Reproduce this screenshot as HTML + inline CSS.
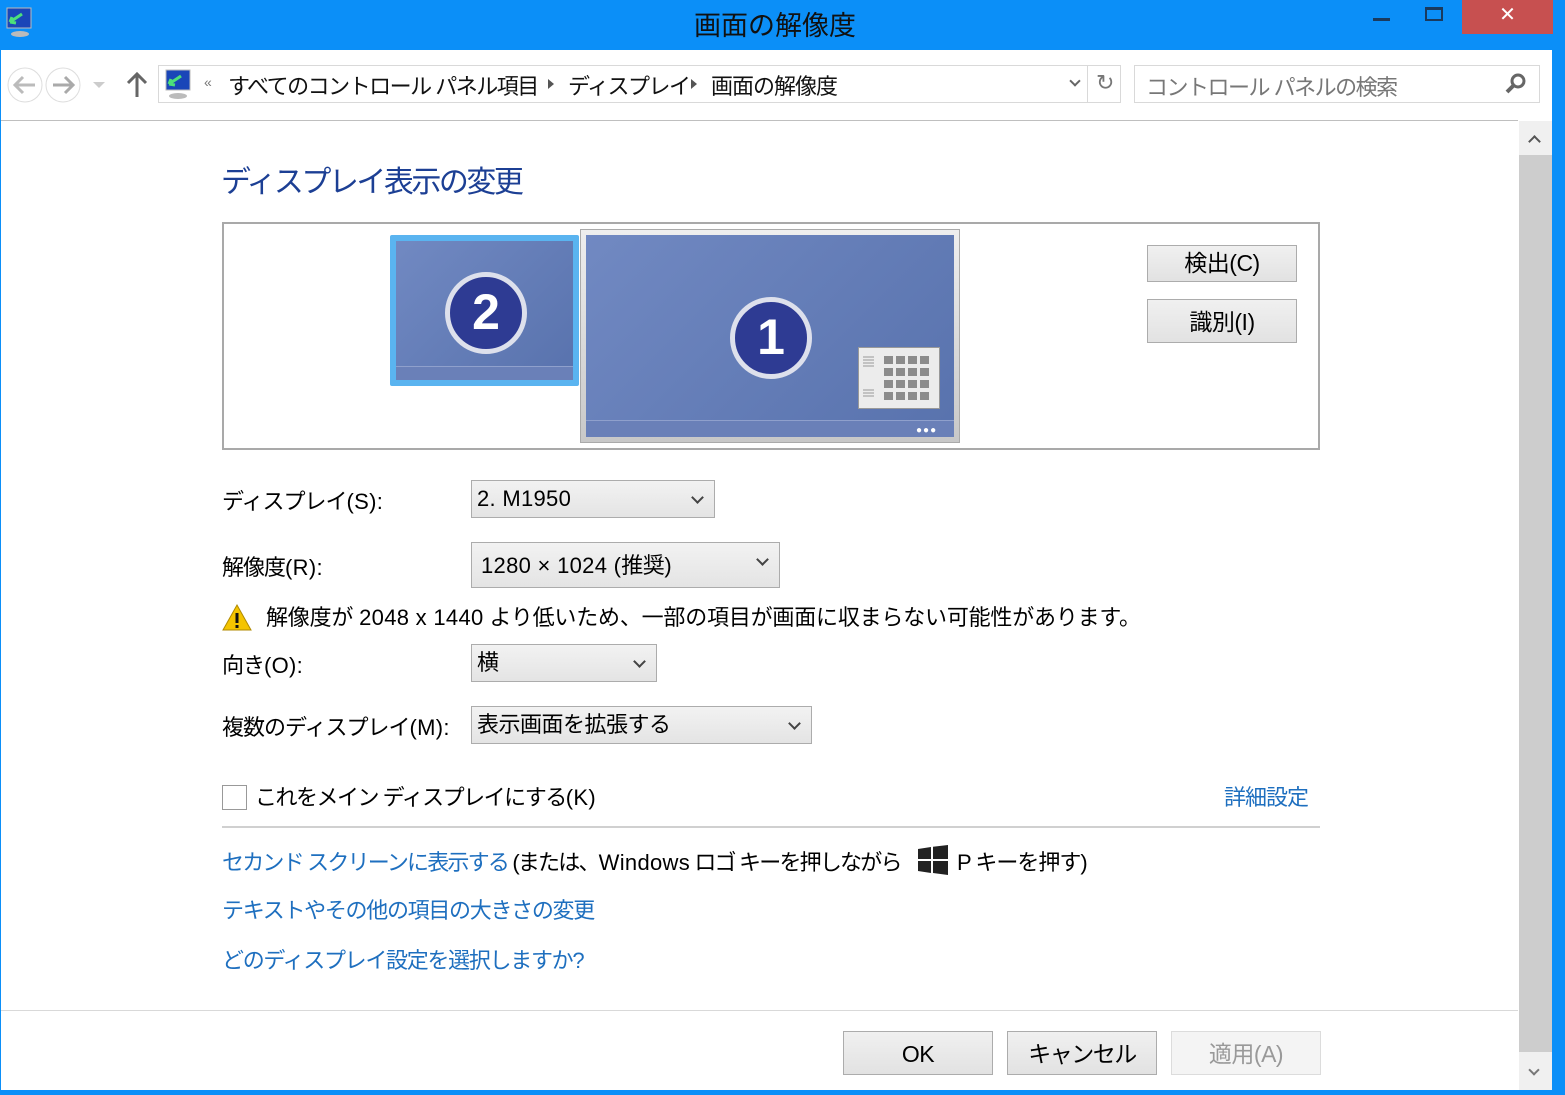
<!DOCTYPE html>
<html><head><meta charset="utf-8"><style>
*{margin:0;padding:0;box-sizing:border-box}
body{width:1565px;height:1095px;background:#0b8ff8;position:relative;overflow:hidden;font-family:"Liberation Sans","Noto Sans CJK JP",sans-serif;color:#000}
.a{position:absolute;white-space:nowrap}
.t{font-size:22px;letter-spacing:-1px}
.l{letter-spacing:0.3px}
.link{color:#1e6fbf}
.dd{position:absolute;background:linear-gradient(#f2f2f2,#e4e4e4);border:1px solid #acacac;font-size:22px;letter-spacing:-0.5px;padding-left:5px;line-height:36px}
.dd:after{content:"";position:absolute;right:12px;top:12px;width:7px;height:7px;border-right:2px solid #444;border-bottom:2px solid #444;transform:rotate(45deg)}
.btn{position:absolute;background:linear-gradient(#f0f0f0,#e2e2e2);border:1px solid #acacac;font-size:23px;text-align:center;letter-spacing:-0.5px}
</style></head><body>
<svg class="a" style="left:6px;top:6px" width="28" height="32" viewBox="0 0 28 32"><rect x="1" y="2" width="24" height="20" fill="#1a46b8" stroke="#bbb"/><path d="M4 16 L16 8 M4 16 l6 1 M4 16 l2-5" stroke="#4de07a" stroke-width="3" fill="none"/><ellipse cx="14" cy="28" rx="9" ry="3" fill="#bbb"/></svg>
<div class="a" style="left:0;width:1550px;top:4px;text-align:center;font-size:27px;color:#111">画面の解像度</div>
<div class="a" style="left:1373px;top:18px;width:17px;height:3px;background:#1a3a5e"></div>
<div class="a" style="left:1425px;top:7px;width:18px;height:14px;border:2px solid #1a3a5e;border-top-width:3px"></div>
<div class="a" style="left:1462px;top:0;width:91px;height:34px;background:#c75050;color:#fff;font-size:20px;text-align:center;line-height:30px">✕</div>
<div class="a" style="left:1px;top:50px;width:1551px;height:1040px;background:#fff"></div>
<svg class="a" style="left:5px;top:66px" width="110" height="38"><circle cx="20" cy="19" r="17" fill="none" stroke="#ddd"/><circle cx="58" cy="19" r="17" fill="none" stroke="#ddd"/><path d="M30 19H10M18 11l-8 8 8 8" stroke="#bbb" stroke-width="3" fill="none"/><path d="M48 19H68M60 11l8 8-8 8" stroke="#aaa" stroke-width="3" fill="none"/><path d="M88 16h12l-6 6z" fill="#ccc"/></svg>
<svg class="a" style="left:126px;top:70px" width="22" height="28"><path d="M11 27V4M2 13l9-9 9 9" stroke="#666" stroke-width="3" fill="none"/></svg>
<div class="a" style="left:158px;top:65px;width:963px;height:38px;border:1px solid #d9d9d9"></div>
<div class="a" style="left:1087px;top:65px;width:1px;height:38px;background:#d9d9d9"></div>
<svg class="a" style="left:163px;top:68px" width="30" height="32" viewBox="0 0 28 32"><rect x="2" y="2" width="24" height="20" fill="#1a46b8" stroke="#bbb"/><path d="M5 16 L17 8 M5 16 l6 1 M5 16 l2-5" stroke="#4de07a" stroke-width="3" fill="none"/><ellipse cx="14" cy="28" rx="9" ry="3" fill="#bbb"/></svg>
<div class="a" style="left:204px;top:74px;font-size:14px;color:#777">«</div>
<div class="a t" style="left:228px;top:69px;color:#111;letter-spacing:-1.5px">すべてのコントロール パネル項目</div>
<div class="a" style="left:548px;top:79px;border-top:5px solid transparent;border-bottom:5px solid transparent;border-left:6px solid #555"></div>
<div class="a t" style="left:568px;top:69px;color:#111;letter-spacing:-1.5px">ディスプレイ</div>
<div class="a" style="left:691px;top:79px;border-top:5px solid transparent;border-bottom:5px solid transparent;border-left:6px solid #555"></div>
<div class="a t" style="left:711px;top:69px;color:#111">画面の解像度</div>
<div class="a" style="left:1071px;top:77px;width:8px;height:8px;border-right:2px solid #666;border-bottom:2px solid #666;transform:rotate(45deg)"></div>
<div class="a" style="left:1096px;top:70px;font-size:22px;color:#777">↻</div>
<div class="a" style="left:1134px;top:65px;width:406px;height:38px;border:1px solid #d9d9d9"></div>
<div class="a t" style="left:1146px;top:70px;color:#777;letter-spacing:-1.5px">コントロール パネルの検索</div>
<svg class="a" style="left:1503px;top:71px" width="26" height="26" viewBox="0 0 26 26"><circle cx="15" cy="10" r="6" stroke="#666" stroke-width="3" fill="none"/><path d="M11 14 L4 21" stroke="#666" stroke-width="4"/></svg>
<div class="a" style="left:1px;top:120px;width:1517px;height:1px;background:#bfbfbf"></div>
<div class="a" style="left:1519px;top:121px;width:33px;height:969px;background:#f0f0f0"></div>
<div class="a" style="left:1519px;top:155px;width:33px;height:897px;background:#cdcdcd"></div>
<div class="a" style="left:1530px;top:137px;width:9px;height:9px;border-left:2px solid #555;border-top:2px solid #555;transform:rotate(45deg)"></div>
<div class="a" style="left:1530px;top:1066px;width:8px;height:8px;border-right:2px solid #777;border-bottom:2px solid #777;transform:rotate(45deg)"></div>
<div class="a" style="left:221px;top:157px;font-size:30px;color:#1c3f94;letter-spacing:-2.5px">ディスプレイ表示の変更</div>
<div class="a" style="left:222px;top:222px;width:1098px;height:228px;border:2px solid #a9a9a9;background:#fff"></div>
<div class="a" style="left:390px;top:235px;width:189px;height:151px;background:#5ab4f0;border-radius:2px"></div>
<div class="a" style="left:396px;top:241px;width:177px;height:139px;background:linear-gradient(135deg,#7189c2,#5872ad)"></div>
<div class="a" style="left:396px;top:366px;width:177px;height:14px;background:#6a80b8;border-top:1px solid #8fa0cc"></div>
<div class="a" style="left:445px;top:272px;width:82px;height:82px;border-radius:50%;background:#2e3b93;border:5px solid #dde0ec;color:#fff;font-size:50px;font-weight:bold;text-align:center;line-height:70px">2</div>
<div class="a" style="left:580px;top:229px;width:380px;height:214px;background:linear-gradient(#eee,#c8c8c8);border:1px solid #aaa"></div>
<div class="a" style="left:586px;top:235px;width:368px;height:202px;background:linear-gradient(135deg,#7189c2,#5872ad)"></div>
<div class="a" style="left:586px;top:420px;width:368px;height:17px;background:#6a80b8;border-top:1px solid #8fa0cc"></div>
<div class="a" style="left:916px;top:425px;font-size:10px;color:#fff;letter-spacing:1px">●●●</div>
<div class="a" style="left:730px;top:297px;width:82px;height:82px;border-radius:50%;background:#2e3b93;border:5px solid #dde0ec;color:#fff;font-size:50px;font-weight:bold;text-align:center;line-height:70px">1</div>
<div class="a" style="left:858px;top:347px;width:82px;height:62px;background:#ececec;border:1px solid #999"></div>
<svg class="a" style="left:858px;top:347px" width="82" height="62"><g fill="#8c8c8c"><rect x="26" y="9" width="9" height="8"/><rect x="38" y="9" width="9" height="8"/><rect x="50" y="9" width="9" height="8"/><rect x="62" y="9" width="9" height="8"/><rect x="26" y="21" width="9" height="8"/><rect x="38" y="21" width="9" height="8"/><rect x="50" y="21" width="9" height="8"/><rect x="62" y="21" width="9" height="8"/><rect x="26" y="33" width="9" height="8"/><rect x="38" y="33" width="9" height="8"/><rect x="50" y="33" width="9" height="8"/><rect x="62" y="33" width="9" height="8"/><rect x="26" y="45" width="9" height="8"/><rect x="38" y="45" width="9" height="8"/><rect x="50" y="45" width="9" height="8"/><rect x="62" y="45" width="9" height="8"/></g><g stroke="#999"><path d="M5 10h11M5 13h11M5 16h11M5 19h11M5 43h11M5 46h11M5 49h11"/></g></svg>
<div class="btn" style="left:1147px;top:245px;width:150px;height:37px;line-height:35px">検出(C)</div>
<div class="btn" style="left:1147px;top:299px;width:150px;height:44px;line-height:44px">識別(I)</div>
<div class="a t" style="left:222px;top:484px">ディスプレイ<span class="l">(S):</span></div>
<div class="dd" style="left:471px;top:480px;width:244px;height:38px"><span class="l">2. M1950</span></div>
<div class="a t" style="left:222px;top:550px">解像度<span class="l">(R):</span></div>
<div class="dd" style="left:471px;top:542px;width:309px;height:46px;line-height:46px;padding-left:9px"><span class="l">1280 × 1024 (</span>推奨<span class="l">)</span></div>
<svg class="a" style="left:221px;top:603px" width="32" height="28"><path d="M16 2 L30 27 H2 Z" fill="#f4c400" stroke="#b08a00"/><rect x="14.5" y="10" width="3" height="10" fill="#111"/><rect x="14.5" y="22" width="3" height="3" fill="#111"/></svg>
<div class="a t" style="left:266px;top:600px;letter-spacing:-0.2px">解像度が <span class="l">2048 x 1440</span> より低いため、一部の項目が画面に収まらない可能性があります。</div>
<div class="a t" style="left:222px;top:648px">向き<span class="l">(O):</span></div>
<div class="dd" style="left:471px;top:644px;width:186px;height:38px">横</div>
<div class="a t" style="left:222px;top:710px">複数のディスプレイ<span class="l">(M):</span></div>
<div class="dd" style="left:471px;top:706px;width:341px;height:38px">表示画面を拡張する</div>
<div class="a" style="left:222px;top:785px;width:25px;height:25px;border:1px solid #999;background:#fff"></div>
<div class="a t" style="left:255px;top:780px;letter-spacing:-1.5px">これをメイン ディスプレイにする<span class="l">(K)</span></div>
<div class="a t link" style="left:1224px;top:780px">詳細設定</div>
<div class="a" style="left:222px;top:826px;width:1098px;height:2px;background:#d0d0d0"></div>
<div class="a t" style="left:222px;top:845px;letter-spacing:-1.8px"><span class="link">セカンド スクリーンに表示する</span> (または、<span class="l">Windows</span> ロゴ キーを押しながら</div>
<svg class="a" style="left:918px;top:845px" width="30" height="30"><path d="M0 4 L13 2 V14 H0Z M15 1.7 L30 0 V14 H15Z M0 16 H13 V28 L0 26Z M15 16 H30 V30 L15 28Z" fill="#222"/></svg>
<div class="a t" style="left:957px;top:845px">P キーを押す)</div>
<div class="a t link" style="left:222px;top:893px;letter-spacing:-1.3px">テキストやその他の項目の大きさの変更</div>
<div class="a t link" style="left:222px;top:943px;letter-spacing:-1.3px">どのディスプレイ設定を選択しますか<span class="l">?</span></div>
<div class="a" style="left:1px;top:1010px;width:1517px;height:1px;background:#d9d9d9"></div>
<div class="btn" style="left:843px;top:1031px;width:150px;height:44px;line-height:44px">OK</div>
<div class="btn" style="left:1007px;top:1031px;width:150px;height:44px;line-height:44px;letter-spacing:-1.5px">キャンセル</div>
<div class="btn" style="left:1171px;top:1031px;width:150px;height:44px;line-height:44px;background:#f4f4f4;border-color:#dcdcdc;color:#999">適用(A)</div>
</body></html>
